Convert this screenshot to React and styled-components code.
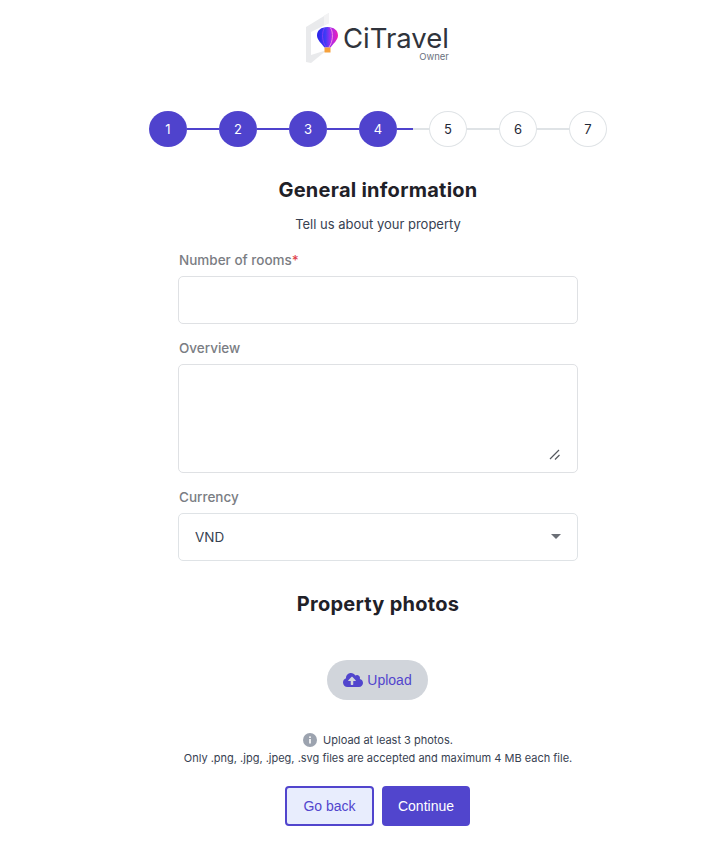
import React from 'react';
import styled, { createGlobalStyle } from 'styled-components';
import { FaCloudUploadAlt } from 'react-icons/fa';

const GlobalStyle = createGlobalStyle`
    html, body {
        margin: 0;
        background: #fff;
        overflow: hidden;
    }
    body {
        font-family: Inter, "Noto Sans", sans-serif;
        color: #1f2128;
    }
`;

const Page = styled.div`
    box-sizing: border-box;
    width: 708px;
    height: 848px;
    padding: 12px 0 0 48px;
    display: flex;
    flex-direction: column;
    align-items: center;
`;

const Logo = styled.div`
    width: 144px;
    height: 53px;
    display: flex;
    align-items: flex-start;
    gap: 0;
`;

const LogoMark = styled.svg`
    width: 37px;
    height: 52px;
    flex: none;
`;

const LogoText = styled.div`
    display: flex;
    flex-direction: column;
    align-items: flex-end;
    padding-top: 12px;
`;

const LogoName = styled.span`
    font-family: Inter, Roboto, sans-serif;
    font-size: 27.5px;
    line-height: 28px;
    color: #30343c;
`;

const LogoRole = styled.span`
    font-size: 9.5px;
    line-height: 10px;
    color: #6b7280;
`;

const Stepper = styled.div`
    margin-top: 46px;
    display: flex;
    align-items: center;
`;

const Step = styled.div`
    box-sizing: border-box;
    width: 38px;
    height: 36px;
    border-radius: 50%;
    display: flex;
    align-items: center;
    justify-content: center;
    font-size: 13px;
    background: ${p => (p.$active ? '#4f43cd' : '#fff')};
    color: ${p => (p.$active ? '#fff' : '#1f2937')};
    border: ${p => (p.$active ? 'none' : '1px solid #dfe3e6')};
`;

const Connector = styled.div`
    width: 32px;
    height: 2px;
    background: ${p =>
        p.$state === 'done'
            ? '#4f43cd'
            : p.$state === 'half'
            ? 'linear-gradient(to right, #4f43cd 50%, #dfe3e6 50%)'
            : '#dfe3e6'};
`;

const Title = styled.h2`
    margin: 0;
    font-size: 20px;
    line-height: 28px;
    font-weight: 700;
    letter-spacing: 0.26px;
    color: #1f2128;
    text-align: center;
`;

const GeneralTitle = styled(Title)`
    margin-top: 29px;
`;

const Subtitle = styled.p`
    margin: 10px 0 0;
    font-size: 13px;
    line-height: 20px;
    color: #374151;
    text-align: center;
`;

const Form = styled.form`
    width: 400px;
    margin-top: 16px;
    display: flex;
    flex-direction: column;
    gap: 14px;
`;

const Field = styled.div`
    display: flex;
    flex-direction: column;
    gap: 6px;
`;

const Label = styled.label`
    padding-left: 1px;
    font-size: 13.5px;
    line-height: 20px;
    font-weight: 500;
    color: #7a7d83;
`;

const Required = styled.span`
    color: #e0424c;
`;

const TextInput = styled.input`
    box-sizing: border-box;
    width: 100%;
    height: 48px;
    border: 1px solid #dfe1e4;
    border-radius: 5px;
    background: #fff;
    outline: none;
`;

const TextAreaWrap = styled.div`
    position: relative;
`;

const TextArea = styled.textarea`
    box-sizing: border-box;
    display: block;
    width: 100%;
    height: 109px;
    border: 1px solid #dfe1e4;
    border-radius: 5px;
    background: #fff;
    outline: none;
    resize: none;
`;

const ResizeGrip = styled.svg`
    position: absolute;
    right: 17px;
    bottom: 12px;
    width: 12px;
    height: 12px;
    pointer-events: none;
`;

const SelectWrap = styled.div`
    position: relative;
`;

const Select = styled.select`
    box-sizing: border-box;
    width: 100%;
    height: 48px;
    padding: 0 16px;
    appearance: none;
    border: 1px solid #dfe3e6;
    border-radius: 5px;
    background: #fff;
    font-family: Inter, sans-serif;
    font-size: 13.5px;
    color: #374151;
    outline: none;
`;

const Caret = styled.span`
    position: absolute;
    right: 17px;
    top: 21px;
    width: 0;
    height: 0;
    border-left: 5px solid transparent;
    border-right: 5px solid transparent;
    border-top: 5px solid #6b6f76;
    pointer-events: none;
`;

const PhotosTitle = styled(Title)`
    margin-top: 29px;
`;

const UploadButton = styled.button`
    margin: 42px 1px 0 0;
    width: 101px;
    height: 40px;
    border: none;
    border-radius: 20px;
    background: #d1d5db;
    color: #5145cd;
    font-family: "Liberation Sans", Arial, sans-serif;
    font-size: 14px;
    display: flex;
    align-items: center;
    justify-content: center;
    gap: 4px;
    padding: 0;
`;

const Note = styled.div`
    margin-top: 31px;
    font-size: 11px;
    line-height: 18px;
    color: #374151;
    text-align: center;
`;

const NoteLine = styled.div`
    display: flex;
    align-items: center;
    justify-content: center;
    gap: 6px;
`;

const InfoIcon = styled.svg`
    width: 14px;
    height: 14px;
    flex: none;
`;

const Actions = styled.div`
    margin: 19px 1px 0 0;
    display: flex;
    gap: 8px;
`;

const BackButton = styled.button`
    box-sizing: border-box;
    width: 89px;
    height: 40px;
    border: 2px solid #5145cd;
    border-radius: 4px;
    background: #e8edfd;
    color: #5145cd;
    font-family: "Liberation Sans", Arial, sans-serif;
    font-size: 14px;
    padding: 0;
`;

const ContinueButton = styled(BackButton)`
    width: 88px;
    background: #5145cd;
    color: #fff;
`;

const steps = [1, 2, 3, 4, 5, 6, 7];

const connectorState = n => {
    if (n < 4) return 'done';
    if (n === 4) return 'half';
    return 'todo';
};

const BrandMark = () => (
    <LogoMark viewBox="0 0 37 52">
        <defs>
            <linearGradient id="balloon" x1="0" y1="0" x2="1" y2="0">
                <stop offset="0" stopColor="#2a22e8" />
                <stop offset="0.4" stopColor="#3f3cf5" />
                <stop offset="0.65" stopColor="#a22cf0" />
                <stop offset="1" stopColor="#f01fb4" />
            </linearGradient>
        </defs>
        <path d="M0 15 L23 1 L23 11 L5 20 L5 43 L21 38 L5 51 L0 50 Z" fill="#e9eaec" />
        <path d="M18 3.5 L23 1 L23 11 L18 13.5 Z" fill="#f3f3f4" />
        <path
            d="M21.5 15 C28 15 32 18.5 32 23.5 C32 28 27 32 24.5 35.5 L18.5 35.5 C16 32 11 28 11 23.5 C11 18.5 15 15 21.5 15 Z"
            fill="url(#balloon)"
        />
        <path d="M18.5 16 C15.5 20 16 30 20 35" stroke="#7a3cf8" strokeWidth="1" fill="none" />
        <path d="M24.5 16 C27.5 20 27 30 23 35" stroke="#f78be0" strokeWidth="1" fill="none" />
        <rect x="18.5" y="35.5" width="6" height="5" fill="#f6a13c" />
    </LogoMark>
);

const App = () => (
    <>
        <GlobalStyle />
        <Page>
            <Logo>
                <BrandMark />
                <LogoText>
                    <LogoName>CiTravel</LogoName>
                    <LogoRole>Owner</LogoRole>
                </LogoText>
            </Logo>

            <Stepper>
                {steps.map(n => (
                    <React.Fragment key={n}>
                        <Step $active={n <= 4}>{n}</Step>
                        {n < 7 && <Connector $state={connectorState(n)} />}
                    </React.Fragment>
                ))}
            </Stepper>

            <GeneralTitle>General information</GeneralTitle>
            <Subtitle>Tell us about your property</Subtitle>

            <Form>
                <Field>
                    <Label>
                        Number of rooms<Required>*</Required>
                    </Label>
                    <TextInput />
                </Field>
                <Field>
                    <Label>Overview</Label>
                    <TextAreaWrap>
                        <TextArea />
                        <ResizeGrip viewBox="0 0 12 12">
                            <path d="M1 10 L10 1 M6 10.5 L10.5 6" stroke="#55585e" strokeWidth="1.2" fill="none" />
                        </ResizeGrip>
                    </TextAreaWrap>
                </Field>
                <Field>
                    <Label>Currency</Label>
                    <SelectWrap>
                        <Select defaultValue="VND">
                            <option value="VND">VND</option>
                        </Select>
                        <Caret />
                    </SelectWrap>
                </Field>
            </Form>

            <PhotosTitle>Property photos</PhotosTitle>

            <UploadButton type="button">
                <FaCloudUploadAlt size={20} />
                Upload
            </UploadButton>

            <Note>
                <NoteLine>
                    <InfoIcon viewBox="0 0 14 14">
                        <circle cx="7" cy="7" r="7" fill="#9ca3af" />
                        <rect x="6.2" y="6" width="1.6" height="4.5" fill="#fff" />
                        <rect x="6.2" y="3.4" width="1.6" height="1.6" fill="#fff" />
                    </InfoIcon>
                    Upload at least 3 photos.
                </NoteLine>
                <div>Only .png, .jpg, .jpeg, .svg files are accepted and maximum 4 MB each file.</div>
            </Note>

            <Actions>
                <BackButton type="button">Go back</BackButton>
                <ContinueButton type="button">Continue</ContinueButton>
            </Actions>
        </Page>
    </>
);

export default App;
